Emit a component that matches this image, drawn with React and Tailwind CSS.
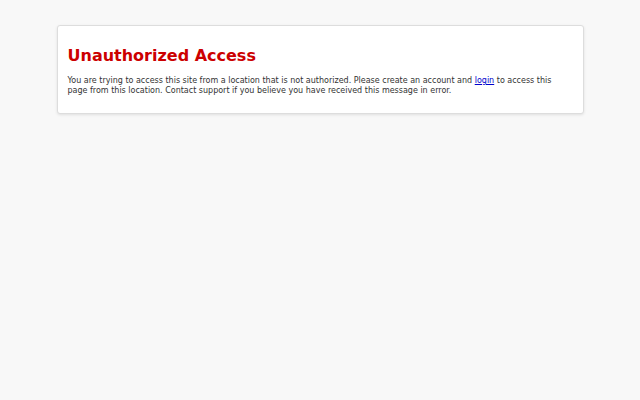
export default function App() {
  return (
    <div className="min-h-screen bg-[#f8f8f8] pt-[25px] font-['DejaVu_Sans',sans-serif]">
      <div className="w-[527px] mx-auto bg-white border border-[#dddddd] rounded-[3px] shadow-[0_1px_3px_rgba(0,0,0,0.1)] px-[10px] pt-[18px] pb-[17px]">
        <h1 className="text-[16px] leading-[24px] font-bold text-[#cc0000] mb-[8px]">Unauthorized Access</h1>
        <p className="text-[8px] leading-[10px] text-[#333333]">
          You are trying to access this site from a location that is not authorized. Please create an account and{' '}
          <a href="#" className="text-[#0000cc] underline">login</a> to access this page from this location. Contact support if you believe you have received this message in error.
        </p>
      </div>
    </div>
  )
}
